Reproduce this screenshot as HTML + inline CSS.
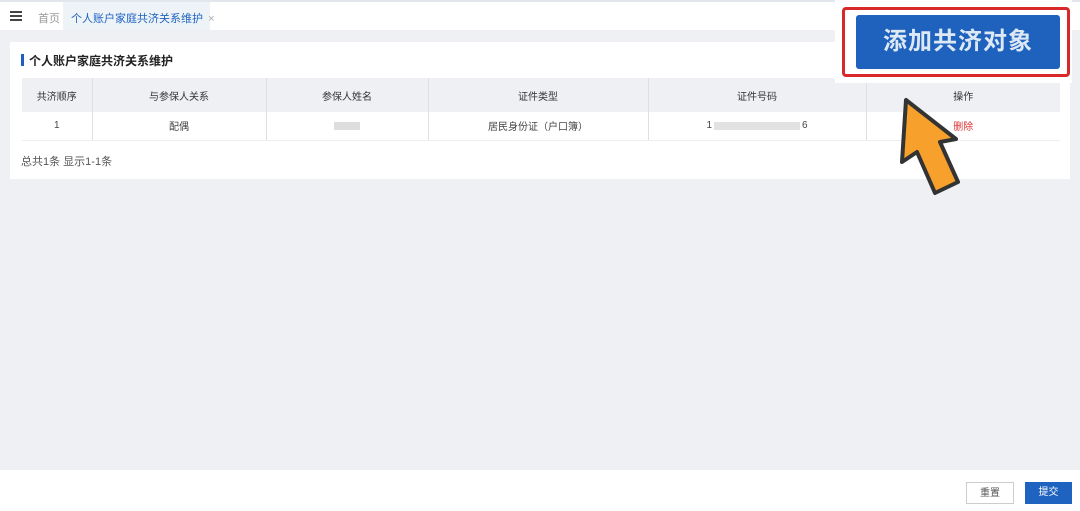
<!DOCTYPE html>
<html><head><meta charset="utf-8"><style>
*{margin:0;padding:0;box-sizing:border-box}
body{width:1080px;height:511px;overflow:hidden;background:#eef0f4;font-family:"Liberation Sans","Noto Sans CJK SC",sans-serif;position:relative;color:#333}
.top{position:absolute;left:0;top:0;width:1080px;height:30px;background:#fff;border-top:2px solid #e3e6ec}
.tab{position:absolute;font-size:11px;top:8px}
.card{position:absolute;left:10px;top:42px;width:1060px;height:137px;background:#fff}
table{position:absolute;left:12px;top:36px;border-collapse:collapse;font-size:10px;width:1038px}
th,td{text-align:center;border-right:1px solid #dcdfe6;vertical-align:middle}
th:last-child,td:last-child{border-right:none}
th{background:#eef0f4;height:34px;font-weight:normal;color:#333}
td{height:28px;border-bottom:1px solid #eee;color:#444}
.bot{position:absolute;left:0;top:470px;width:1080px;height:41px;background:#fff}
.btn{position:absolute;top:12px;height:22px;font-size:10px;line-height:22px;text-align:center}
</style></head><body>
<div class="top">
 <div style="position:absolute;left:10px;top:9px;width:12px;height:2px;background:#444;box-shadow:0 4px 0 #444,0 8px 0 #444"></div>
 <div class="tab" style="left:38px;color:#999">首页</div>
 <div style="position:absolute;left:63px;top:0;width:147px;height:28px;background:#eef3f8"></div>
 <div class="tab" style="left:71px;color:#1f63c0">个人账户家庭共济关系维护 <span style="color:#aaa;margin-left:2px">×</span></div>
</div>
<div class="card">
 <div style="position:absolute;left:11px;top:12px;width:3px;height:12px;background:#1f5fc0"></div>
 <div style="position:absolute;left:19px;top:10px;font-size:12px;font-weight:bold;color:#222">个人账户家庭共济关系维护</div>
 <table>
  <tr><th style="width:70px">共济顺序</th><th style="width:174px">与参保人关系</th><th style="width:162px">参保人姓名</th><th style="width:220px">证件类型</th><th style="width:218px">证件号码</th><th>操作</th></tr>
  <tr><td>1</td><td>配偶</td><td><span style="display:inline-block;width:26px;height:8px;background:#ddd;vertical-align:middle"></span></td><td>居民身份证（户口簿）</td><td>1<span style="display:inline-block;width:86px;height:8px;background:#e2e2e2;margin:0 2px;vertical-align:middle"></span>6</td><td style="color:#d33">删除</td></tr>
 </table>
 <div style="position:absolute;left:11px;top:111px;font-size:11px;color:#555">总共1条 显示1-1条</div>
</div>
<div class="bot">
 <div class="btn" style="left:966px;width:48px;border:1px solid #ccc;color:#555">重置</div>
 <div class="btn" style="left:1025px;width:47px;background:#1f63c0;color:#fff">提交</div>
</div>
<div style="position:absolute;left:835px;top:0;width:237px;height:83px;background:#fff"></div>
<div style="position:absolute;left:842px;top:7px;width:228px;height:70px;border:3px solid #d8282a;border-radius:4px"></div>
<div style="position:absolute;left:856px;top:15px;width:204px;height:54px;background:#1f62bd;border-radius:3px;color:#dce8f5;font-size:24px;line-height:54px;text-align:center;font-weight:bold;letter-spacing:1px">添加共济对象</div>
<svg style="position:absolute;left:0;top:0" width="1080" height="511">
<path d="M906 100 L902 162 L917 152 L935 193 L958 182 L940 142 L956 139 Z" fill="#f7a12c" stroke="#333" stroke-width="4" stroke-linejoin="round"/>
</svg>
</body></html>
